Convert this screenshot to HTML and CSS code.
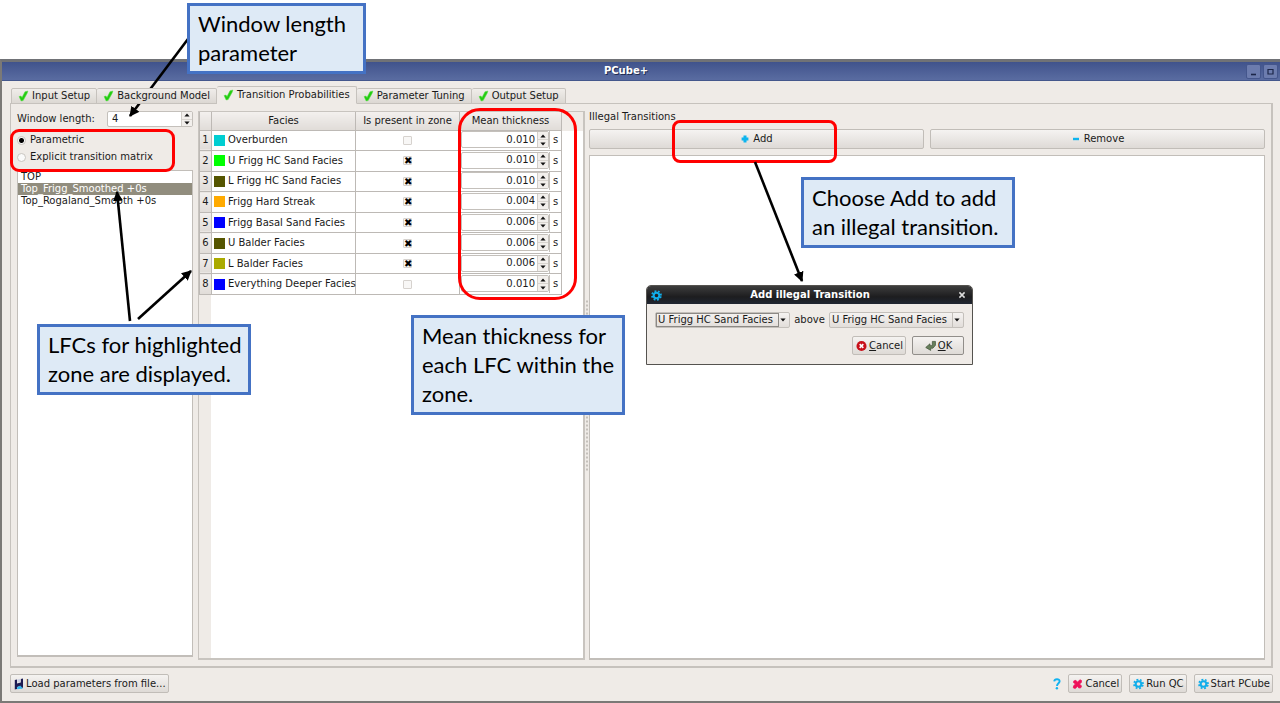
FILE: index.html
```html
<!DOCTYPE html>
<html lang="en">
<head>
<meta charset="utf-8">
<title>PCube+</title>
<link rel="stylesheet" href="styles.css">
</head>
<body>
<svg class="defs" width="0" height="0" aria-hidden="true">
  <symbol id="check" viewBox="0 0 12 12"><path d="M1.2 6.6 3.2 6l1.2 1.6L7.6 1.4 10.8.6 10 3 5.6 11 3.4 11.4Z" fill="#22cc10" stroke="#58dc48" stroke-width=".6"/></symbol>
  <symbol id="gear" viewBox="0 0 12 12"><g fill="none" stroke="#10adea"><circle cx="6" cy="6" r="3.1" stroke-width="2.2"/><circle cx="6" cy="6" r="4.9" stroke-width="1.9" stroke-dasharray="2 1.85" transform="rotate(12 6 6)"/></g></symbol>
  <symbol id="down" viewBox="0 0 6 4"><path d="M.4.5h5.2L3 3.6Z" fill="#111"/></symbol>
  <symbol id="up" viewBox="0 0 6 4"><path d="M.4 3.5h5.2L3 .4Z" fill="#111"/></symbol>
</svg>
<main class="stage">
  <section class="window">
    <header class="titlebar">
      <h1>PCube+</h1>
      <div class="wm">
        <button type="button" aria-label="Minimize"><svg viewBox="0 0 13 13"><path d="M4 9.5h5" stroke="#1c2648" stroke-width="1.6"/></svg></button>
        <button type="button" aria-label="Maximize"><svg viewBox="0 0 13 13"><path d="M4 4.5h5v4.5h-5Z" fill="none" stroke="#1c2648" stroke-width="1.2"/></svg></button>
      </div>
    </header>
    <div class="client">
      <nav class="tabs" role="tablist">
        <button type="button" role="tab" class="tab"><svg><use href="#check"/></svg>Input Setup</button>
        <button type="button" role="tab" class="tab"><svg><use href="#check"/></svg>Background Model</button>
        <button type="button" role="tab" class="tab active" aria-selected="true"><svg><use href="#check"/></svg>Transition Probabilities</button>
        <button type="button" role="tab" class="tab"><svg><use href="#check"/></svg>Parameter Tuning</button>
        <button type="button" role="tab" class="tab"><svg><use href="#check"/></svg>Output Setup</button>
      </nav>
      <div class="panel">
        <div class="zones">
          <div class="length">
            <label for="len">Window length:</label>
            <div class="spin"><input id="len" type="text" value="4"><span class="steps"><button type="button" aria-label="Increase"><svg><use href="#up"/></svg></button><button type="button" aria-label="Decrease"><svg><use href="#down"/></svg></button></span></div>
          </div>
          <div class="modes">
            <label><input type="radio" name="mode" checked>Parametric</label>
            <label><input type="radio" name="mode">Explicit transition matrix</label>
          </div>
          <ul class="zone-list">
            <li>TOP</li>
            <li class="selected">Top_Frigg_Smoothed +0s</li>
            <li>Top_Rogaland_Smooth +0s</li>
          </ul>
        </div>
        <div class="facies-frame">
          <table class="facies">
            <colgroup><col class="c-num"><col class="c-name"><col class="c-present"><col class="c-mean"></colgroup>
            <thead><tr><th></th><th>Facies</th><th>Is present in zone</th><th>Mean thickness</th></tr></thead>
            <tbody>
              <tr><th>1</th><td><div class="name"><i class="sw cyan"></i>Overburden</div></td><td class="mid"><input type="checkbox" aria-label="Overburden present"></td><td><div class="mean"><div class="spin"><input type="text" value="0.010" aria-label="Overburden thickness"><span class="steps"><button type="button" aria-label="Increase"><svg><use href="#up"/></svg></button><button type="button" aria-label="Decrease"><svg><use href="#down"/></svg></button></span></div><span class="unit">s</span></div></td></tr>
              <tr><th>2</th><td><div class="name"><i class="sw green"></i>U Frigg HC Sand Facies</div></td><td class="mid"><input type="checkbox" checked aria-label="U Frigg HC Sand present"></td><td><div class="mean"><div class="spin"><input type="text" value="0.010" aria-label="U Frigg HC Sand thickness"><span class="steps"><button type="button" aria-label="Increase"><svg><use href="#up"/></svg></button><button type="button" aria-label="Decrease"><svg><use href="#down"/></svg></button></span></div><span class="unit">s</span></div></td></tr>
              <tr><th>3</th><td><div class="name"><i class="sw olive"></i>L Frigg HC Sand Facies</div></td><td class="mid"><input type="checkbox" checked aria-label="L Frigg HC Sand present"></td><td><div class="mean"><div class="spin"><input type="text" value="0.010" aria-label="L Frigg HC Sand thickness"><span class="steps"><button type="button" aria-label="Increase"><svg><use href="#up"/></svg></button><button type="button" aria-label="Decrease"><svg><use href="#down"/></svg></button></span></div><span class="unit">s</span></div></td></tr>
              <tr><th>4</th><td><div class="name"><i class="sw orange"></i>Frigg Hard Streak</div></td><td class="mid"><input type="checkbox" checked aria-label="Frigg Hard Streak present"></td><td><div class="mean"><div class="spin"><input type="text" value="0.004" aria-label="Frigg Hard Streak thickness"><span class="steps"><button type="button" aria-label="Increase"><svg><use href="#up"/></svg></button><button type="button" aria-label="Decrease"><svg><use href="#down"/></svg></button></span></div><span class="unit">s</span></div></td></tr>
              <tr><th>5</th><td><div class="name"><i class="sw blue"></i>Frigg Basal Sand Facies</div></td><td class="mid"><input type="checkbox" checked aria-label="Frigg Basal Sand present"></td><td><div class="mean"><div class="spin"><input type="text" value="0.006" aria-label="Frigg Basal Sand thickness"><span class="steps"><button type="button" aria-label="Increase"><svg><use href="#up"/></svg></button><button type="button" aria-label="Decrease"><svg><use href="#down"/></svg></button></span></div><span class="unit">s</span></div></td></tr>
              <tr><th>6</th><td><div class="name"><i class="sw olive"></i>U Balder Facies</div></td><td class="mid"><input type="checkbox" checked aria-label="U Balder present"></td><td><div class="mean"><div class="spin"><input type="text" value="0.006" aria-label="U Balder thickness"><span class="steps"><button type="button" aria-label="Increase"><svg><use href="#up"/></svg></button><button type="button" aria-label="Decrease"><svg><use href="#down"/></svg></button></span></div><span class="unit">s</span></div></td></tr>
              <tr><th>7</th><td><div class="name"><i class="sw mustard"></i>L Balder Facies</div></td><td class="mid"><input type="checkbox" checked aria-label="L Balder present"></td><td><div class="mean"><div class="spin"><input type="text" value="0.006" aria-label="L Balder thickness"><span class="steps"><button type="button" aria-label="Increase"><svg><use href="#up"/></svg></button><button type="button" aria-label="Decrease"><svg><use href="#down"/></svg></button></span></div><span class="unit">s</span></div></td></tr>
              <tr><th>8</th><td><div class="name"><i class="sw blue"></i>Everything Deeper Facies</div></td><td class="mid"><input type="checkbox" aria-label="Everything Deeper present"></td><td><div class="mean"><div class="spin"><input type="text" value="0.010" aria-label="Everything Deeper thickness"><span class="steps"><button type="button" aria-label="Increase"><svg><use href="#up"/></svg></button><button type="button" aria-label="Decrease"><svg><use href="#down"/></svg></button></span></div><span class="unit">s</span></div></td></tr>
            </tbody>
          </table>
        </div>
        <div class="splitter"></div>
        <div class="illegal">
          <h2>Illegal Transitions</h2>
          <div class="actions">
            <button type="button" class="btn"><svg viewBox="0 0 8 8"><path d="M4 .6v6.8M.6 4h6.8" stroke="#0db4ee" stroke-width="3"/></svg>Add</button>
            <button type="button" class="btn"><svg viewBox="0 0 8 8"><path d="M1 4h6" stroke="#0db4ee" stroke-width="2.4"/></svg>Remove</button>
          </div>
          <div class="illegal-list"></div>
        </div>
      </div>
      <footer class="footer">
        <button type="button" class="btn load"><svg viewBox="0 0 10 12"><path d="M.8 2 3 1.4v4L6.8 4.6V1l2.2-.6v9L7 10.6 6 8 3 9v2L.8 11.6Z" fill="#1c1b52"/><path d="M3.4 1.4 6.4.8v3l-3 .8Z" fill="#cfd3e4"/><path d="m2.8 9.6 3.4-2L9 10.4l-5.6.8Z" fill="#35b8ee"/></svg>Load parameters from file...</button>
        <button type="button" class="help" aria-label="Help"><svg viewBox="0 0 8 12"><path d="M1.2 3.4C1.6.4 6.8.6 6.6 3.4 6.4 5.2 4 5.4 4 8" fill="none" stroke="#12b2f0" stroke-width="1.9"/><circle cx="3.9" cy="10.3" r="1.2" fill="#12b2f0"/></svg></button>
        <button type="button" class="btn"><svg viewBox="0 0 12 12"><path d="M2 2.6 4.2 2 6 4 8.6 1.4l1.8.8-.2 2.2L8.2 6l2.2 2.2-.8 2-2.2.2L6 8.4 3.6 11l-2.2-.8.4-2.4L3.8 6 1.6 4.4Z" fill="#ee1059" stroke="#ee1059" stroke-width=".8"/></svg>Cancel</button>
        <button type="button" class="btn"><svg><use href="#gear"/></svg>Run QC</button>
        <button type="button" class="btn"><svg><use href="#gear"/></svg>Start PCube</button>
      </footer>
    </div>
  </section>

  <section class="dialog" role="dialog" aria-labelledby="dlg-title">
    <header class="dialog-title">
      <svg class="gear"><use href="#gear"/></svg>
      <h2 id="dlg-title">Add illegal Transition</h2>
      <button type="button" aria-label="Close"><svg viewBox="0 0 8 8"><path d="m1.4 1.4 5.2 5.2m0-5.2L1.4 6.6" stroke="#ddd" stroke-width="1.5"/></svg></button>
    </header>
    <div class="dialog-row">
      <div class="combo focus"><select id="upper" aria-label="Upper facies"><option>U Frigg HC Sand Facies</option></select><svg><use href="#down"/></svg></div>
      <label for="lower">above</label>
      <div class="combo"><select id="lower"><option>U Frigg HC Sand Facies</option></select><svg><use href="#down"/></svg></div>
    </div>
    <div class="dialog-buttons">
      <button type="button" class="btn"><svg viewBox="0 0 12 12"><circle cx="6" cy="6" r="5.5" fill="#c8101a"/><path d="m4 4 4 4m0-4L4 8" stroke="#fff" stroke-width="1.7"/></svg><span><u>C</u>ancel</span></button>
      <button type="button" class="btn default"><svg viewBox="0 0 12 12"><path d="M8 1h3.4v4.2L8.6 8.4H6.2v2.4L.8 7.6l4.6-4v2H8Z" fill="#68805c" stroke="#42533b" stroke-width=".8"/></svg><span><u>O</u>K</span></button>
    </div>
  </section>

  <div class="mark mark-modes"></div>
  <div class="mark mark-mean"></div>
  <div class="mark mark-add"></div>
  <svg class="arrows" viewBox="0 0 1280 703" aria-hidden="true">
    <defs><marker id="head" viewBox="0 0 10 10" refX="9" refY="5" markerWidth="10" markerHeight="10" markerUnits="userSpaceOnUse" orient="auto"><path d="M0 0 10 5 0 10Z"/></marker></defs>
    <g stroke="#000" stroke-width="2.6">
      <path d="M188 39 130 116" marker-end="url(#head)"/>
      <path d="M130 321 117 192" marker-end="url(#head)"/>
      <path d="M138 319 191 271" marker-end="url(#head)"/>
      <path d="M755 162 802 281" marker-end="url(#head)"/>
    </g>
  </svg>
  <p class="note note-length">Window length<br>parameter</p>
  <p class="note note-zone">LFCs for highlighted<br>zone are displayed.</p>
  <p class="note note-mean">Mean thickness for<br>each LFC within the<br>zone.</p>
  <p class="note note-add">Choose Add to add<br>an illegal transition.</p>
</main>
</body>
</html>
```
FILE: styles.css
```css
* { box-sizing: border-box; }
body { margin: 0; background: #fff; color: #1a1a1a; font: 10px/12px "DejaVu Sans", sans-serif; }
button, input, select { font: inherit; color: inherit; margin: 0; padding: 0; border: 0; background: none; border-radius: 0; }
h1, h2, p, ul { margin: 0; padding: 0; font: inherit; }
ul { list-style: none; }
svg { display: block; flex: none; }
.defs { position: absolute; }
.stage { position: relative; min-height: 100vh; display: flex; flex-direction: column; padding-top: 59px; }

.window { flex: 1; display: flex; flex-direction: column; background: #efebe7; border: 2px solid #7b7976; border-top: 3px solid #707276; border-right: 0; }
.titlebar { display: grid; grid-template-columns: 36px 1fr 36px; align-items: center; height: 19px; background: linear-gradient(#40538c, #5a6ca1); border-bottom: 1px solid #44578c; color: #fff; }
.titlebar h1 { grid-column: 2; text-align: center; font-weight: bold; padding-right: 30px; text-shadow: 1px 1px #1f2b50; }
.wm { display: flex; gap: 2px; justify-content: flex-end; padding-right: 2px; }
.wm button { width: 15px; height: 15px; border: 1px solid #44568c; border-radius: 2px; background: #6c7cae; }
.wm svg { width: 13px; height: 13px; }

.client { flex: 1; display: flex; flex-direction: column; padding: 5px 7px 8px 8px; }
.tabs { display: flex; align-items: flex-end; height: 18px; padding-left: 1px; margin-bottom: -1px; z-index: 1; }
.tab { display: flex; align-items: center; gap: 3px; height: 16px; padding: 0 6px; border: 1px solid #c6c2bd; border-left-width: 0; border-radius: 2px 2px 0 0; background: linear-gradient(#f0edea, #dcd8d3); }
.tab:first-child { border-left-width: 1px; }
.tab.active { height: 18px; background: #efebe7; border-bottom-color: #efebe7; }
.tab svg { width: 11px; height: 12px; }

.panel { flex: 1; display: flex; border: 1px solid #c6c2bd; border-right-width: 2px; border-bottom-width: 2px; padding: 7px 6px 6px; }
.zones { width: 176px; display: flex; flex-direction: column; padding-bottom: 3px; }
.length { display: flex; align-items: center; justify-content: space-between; height: 16px; }
.length .spin { width: 86px; height: 16px; }
.length .spin input { padding-left: 4px; }

.spin { display: flex; min-width: 0; border: 1px solid #c4c0bb; border-radius: 2px; background: #fff; }
.spin input { flex: 1; width: 0; min-width: 0; outline: none; }
.steps { flex: none; width: 11px; display: flex; flex-direction: column; border-left: 1px solid #d2cec9; background: #f2efec; }
.steps button { flex: 1; display: flex; align-items: center; justify-content: center; min-height: 0; }
.steps button + button { border-top: 1px solid #d8d4cf; }
.steps svg { width: 6px; height: 4px; }

.modes { display: flex; flex-direction: column; gap: 5px; padding: 7px 0 7px; }
.modes label { display: flex; align-items: center; gap: 4px; height: 12px; }
.modes input { appearance: none; width: 9px; height: 9px; border: 1px solid #c9c5c0; border-radius: 50%; background: #fafafa; }
.modes input:checked { background: radial-gradient(circle, #000 0 2px, #fafafa 3px); }
.zone-list { flex: 1; border: 1px solid #c2beb9; border-width: 1px 1px 2px 1px; background: #fff; }
.zone-list li { line-height: 12px; padding-left: 3px; }
.zone-list .selected { background: #918d7e; color: #fff; }

.facies-frame { width: 387px; margin-left: 5px; border: 2px solid #c8c4bf; border-width: 1px 2px 2px 1px; background: linear-gradient(#efebe7 0 0) 0 0 / 100% 19px no-repeat, linear-gradient(#efebe7 0 0) 0 0 / 12px 100% no-repeat, #fff; }
.facies { table-layout: fixed; width: 362px; height: 183px; border-collapse: collapse; }
.c-num { width: 12px; } .c-name { width: 144px; } .c-present { width: 104px; } .c-mean { width: 102px; }
.facies th, .facies td { padding: 0; border: 1px solid #bdb9b5; }
.facies thead th { height: 18px; border-top: 0; }
.facies th { font-weight: normal; background: linear-gradient(#f3f0ee, #e0dcd8); }
.name { display: flex; align-items: center; gap: 3px; padding-left: 2px; white-space: nowrap; }
.sw { width: 11px; height: 11px; flex: none; }
.cyan { background: #00ced1; } .green { background: #00ff00; } .olive { background: #555500; }
.orange { background: #ffaa00; } .blue { background: #0000ff; } .mustard { background: #aaaa00; }
.mid input { appearance: none; display: block; width: 9px; height: 9px; margin: 0 auto; border: 1px solid #d6d2ce; border-radius: 1px; background: #f8f7f6; }
.mid input:checked::before { content: "✖"; display: block; width: 7px; height: 7px; line-height: 7px; text-align: center; color: #000; }
.mean { display: flex; height: 18px; padding-left: 1px; }
.mean .spin { flex: 1; height: 17px; }
.mean .spin input { text-align: right; padding-right: 2px; }
.unit { flex: none; width: 12px; line-height: 17px; text-align: center; border-left: 1px solid #c4c0bb; }

.splitter { width: 4px; background: radial-gradient(circle, #c4c0bb 0 1px, transparent 1px) center / 4px 4px repeat-y content-box; padding: 188px 0; }
.illegal { flex: 1; display: flex; flex-direction: column; }
.illegal h2 { height: 17px; line-height: 12px; }
.actions { display: grid; grid-template-columns: 1fr 1fr; gap: 6px; padding: 1px 0 6px; }
.btn { display: flex; align-items: center; justify-content: center; gap: 2px; height: 20px; padding: 0 2px 0 3px; border: 1px solid #c1bdb8; border-radius: 2px; background: linear-gradient(#f5f3f1, #dedad6); white-space: nowrap; }
.btn svg { width: 11px; height: 12px; }
.actions .btn { gap: 4px; }
.actions svg { width: 8px; height: 8px; }
.illegal-list { flex: 1; border: 1px solid #c2beb9; border-width: 1px 1px 2px 1px; background: #fff; }
.footer { display: flex; align-items: center; gap: 7px; padding-top: 6px; }
.footer .btn { height: 19px; }
.load { margin-right: auto; }
.load svg { width: 10px; }
.help svg { width: 8px; height: 12px; }

.dialog { position: absolute; left: 646px; top: 285px; width: 327px; height: 80px; border: 1px solid #55534f; border-radius: 5px 5px 0 0; background: #efebe7; overflow: hidden; }
.dialog-title { display: flex; align-items: center; height: 18px; padding: 0 6px 0 4px; color: #fff; background: linear-gradient(#3d3d3d, #1d1d1f 60%, #202632); }
.dialog-title h2 { flex: 1; text-align: center; font-weight: bold; }
.dialog-title svg { width: 8px; height: 8px; }
.dialog-title .gear { width: 11px; height: 11px; }
.dialog-row { display: flex; align-items: center; justify-content: space-between; padding: 8px; }
.combo { position: relative; width: 135px; height: 16px; border: 1px solid #c4c0bb; border-radius: 2px; background: linear-gradient(#f5f3f1, #e2deda); }
.combo select { appearance: none; display: block; width: 123px; height: 14px; line-height: 12px; padding-left: 2px; border-right: 1px solid #c4c0bb; outline: none; }
.combo.focus select { border: 1px solid #8c8985; padding-left: 1px; }
.combo svg { position: absolute; right: 3px; top: 5px; width: 6px; height: 4px; pointer-events: none; }
.dialog-buttons { display: flex; justify-content: flex-end; gap: 6px; padding-right: 8px; }
.dialog-buttons .btn { height: 19px; }
.dialog-buttons .default { width: 52px; border-color: #918e8a; }

.mark { position: absolute; border: 3px solid #f00; pointer-events: none; }
.mark-modes { left: 10px; top: 129px; width: 165px; height: 43px; border-radius: 9px; }
.mark-mean { left: 458px; top: 108px; width: 119px; height: 192px; border-radius: 22px; }
.mark-add { left: 672px; top: 120px; width: 165px; height: 43px; border-radius: 8px; }
.arrows { position: absolute; left: 0; top: 0; width: 1280px; height: 703px; pointer-events: none; }
.note { position: absolute; border: 3px solid #4472c4; background: #deeaf6; color: #000; padding: 3px 8px 4px; font: 22px/29px Lato, sans-serif; white-space: nowrap; }
.note-length { left: 187px; top: 3px; width: 179px; }
.note-zone { left: 37px; top: 324px; width: 214px; }
.note-mean { left: 411px; top: 315px; width: 214px; }
.note-add { left: 801px; top: 177px; width: 214px; }
```
